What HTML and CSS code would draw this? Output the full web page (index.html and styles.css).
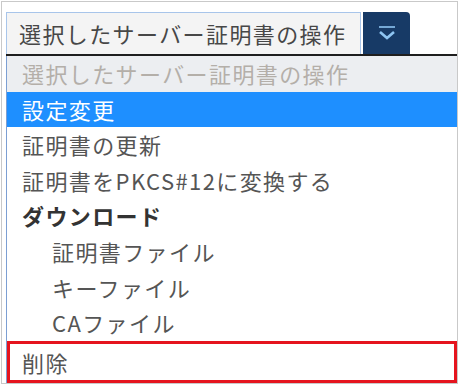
FILE: index.html
```html
<!DOCTYPE html>
<html lang="ja">
<head>
    <meta charset="UTF-8">
    <title>サーバー証明書の操作</title>
    <link rel="stylesheet" href="styles.css">
</head>
<body>
    <div class="frame">
        <div class="select-row">
            <div class="select-box">選択したサーバー証明書の操作</div>
            <div class="select-btn">
                <svg width="20" height="16" viewBox="0 0 20 16">
                    <line x1="2" y1="2" x2="18" y2="2" stroke="#8ec5f2" stroke-width="1.6"/>
                    <polyline points="3,7 10,13 17,7" fill="none" stroke="#8ec5f2" stroke-width="2.6"/>
                </svg>
            </div>
        </div>
        <ul class="options">
            <li class="opt placeholder">選択したサーバー証明書の操作</li>
            <li class="opt selected">設定変更</li>
            <li class="opt">証明書の更新</li>
            <li class="opt">証明書をPKCS#12に変換する</li>
            <li class="opt group">ダウンロード</li>
            <li class="opt sub">証明書ファイル</li>
            <li class="opt sub">キーファイル</li>
            <li class="opt sub">CAファイル</li>
            <li class="opt danger">削除</li>
        </ul>
    </div>
</body>
</html>
```

FILE: styles.css
```css
body {
    margin: 0;
    padding: 0;
    background: #fff;
    font-family: "Noto Sans CJK JP", "Noto Sans", sans-serif;
}
.frame {
    margin: 1px 0 0 1px;
    width: 457px;
    height: 383px;
    box-sizing: border-box;
    border: 1px solid #c9c9c9;
    padding: 10px 0 0 4px;
    overflow: hidden;
}
.select-row {
    display: flex;
    height: 42px;
    border-bottom: 2px solid #1e1e1e;
}
.select-box {
    width: 355px;
    box-sizing: border-box;
    background: #f4f4f4;
    border: 1px solid #a8c5ea;
    border-bottom: none;
    padding-left: 12px;
    font-size: 22px;
    letter-spacing: 1.4px;
    line-height: 40px;
    color: #474747;
    white-space: nowrap;
}
.select-btn {
    width: 47px;
    margin-left: 2px;
    background: #173a66;
    border-radius: 0 4px 0 0;
    display: flex;
    align-items: center;
    justify-content: center;
}
.options {
    list-style: none;
    margin: 0;
    padding: 0;
    border-left: 1px solid #7c9fd3;
}
.opt {
    height: 35.6px;
    line-height: 35.6px;
    padding-left: 15px;
    font-size: 22px;
    letter-spacing: 1.4px;
    color: #555;
    white-space: nowrap;
}
.opt.placeholder {
    background: #eceef1;
    color: #b4afa9;
}
.opt.selected {
    background: #1e8fff;
    color: #fff;
}
.opt.group {
    font-weight: bold;
    color: #333;
}
.opt.sub {
    padding-left: 45px;
}
.opt.danger {
    border: 3px solid #e5141e;
    height: 36px;
    line-height: 36px;
    padding-left: 12px;
}
```
